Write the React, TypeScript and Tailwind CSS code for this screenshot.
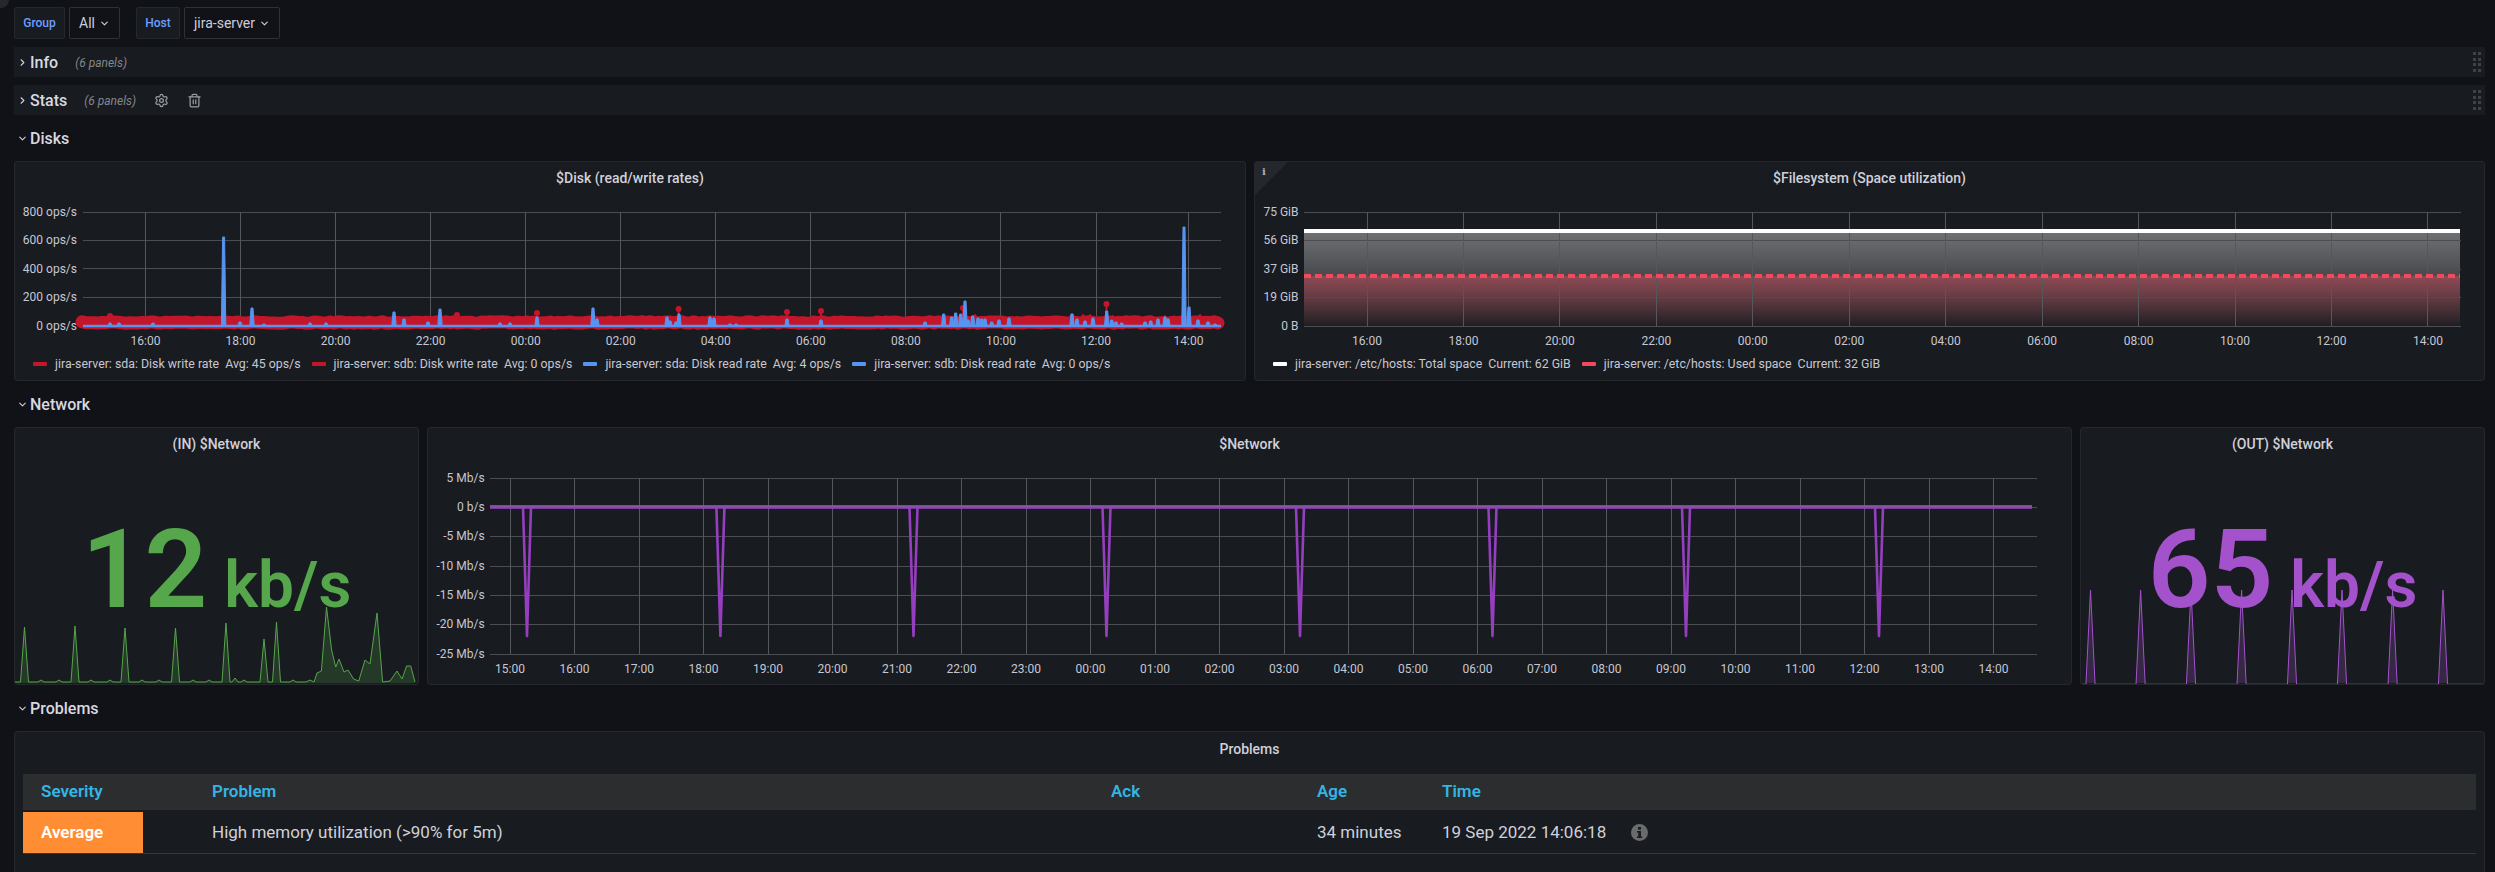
import { ReactNode } from "react";
import { ChevronDown, ChevronRight, Settings, Trash2 } from "lucide-react";

const GRID = "#4b4d52";
const GRID_V = "#55575b";
const AXIS = "#c7c7d4";

function seeded(seed: number) {
  let s = seed;
  return () => {
    s = (s * 16807) % 2147483647;
    return s / 2147483647;
  };
}

function TimeAxis({ ticks, top, bottom, labelY }: { ticks: [number, string][]; top: number; bottom: number; labelY: number }) {
  return (
    <>
      {ticks.map(([x, label]) => (
        <g key={label}>
          <line x1={Math.floor(x) + 0.5} x2={Math.floor(x) + 0.5} y1={top} y2={bottom} stroke={GRID_V} />
          <text x={x} y={labelY} fontSize={12} fill={AXIS} textAnchor="middle" dominantBaseline="central">
            {label}
          </text>
        </g>
      ))}
    </>
  );
}

function ValueAxis({ rows, left, right, labelX }: { rows: [number, string][]; left: number; right: number; labelX: number }) {
  return (
    <>
      {rows.map(([y, label]) => (
        <g key={label}>
          <line x1={left} x2={right} y1={Math.floor(y) + 0.5} y2={Math.floor(y) + 0.5} stroke={GRID} />
          <text x={labelX} y={y} fontSize={12} fill={AXIS} textAnchor="end" dominantBaseline="central">
            {label}
          </text>
        </g>
      ))}
    </>
  );
}

function hourTicks(start: number, step: number, hours: number[]): [number, string][] {
  return hours.map((h, i) => [start + step * i, `${String(h).padStart(2, "0")}:00`]);
}

function RowTitle({ title, open, panels, children }: { title: string; open?: boolean; panels?: boolean; children?: ReactNode }) {
  return (
    <div className={`h-[30px] mb-2 flex items-center ${panels ? "bg-[#181b1f]" : ""}`}>
      <span className="w-4 flex justify-center text-[#ccccdc]">
        {open ? <ChevronDown size={11} strokeWidth={2.5} /> : <ChevronRight size={11} strokeWidth={2.5} />}
      </span>
      <span className="pt-[1px] text-base font-medium text-[#d8d9e0]">{title}</span>
      {panels && <span className="ml-[17px] pt-[1px] text-xs italic text-[#85868c]">(6 panels)</span>}
      {children}
      {panels && (
        <span className="ml-auto mr-[4px] grid grid-cols-2 gap-x-[2px] gap-y-[2.5px]">
          {Array.from({ length: 8 }).map((_, i) => (
            <span key={i} className="w-[3px] h-[3px] bg-[#3f4145]" />
          ))}
        </span>
      )}
    </div>
  );
}

function Legend({ items }: { items: [string, string, string][] }) {
  return (
    <div className="flex items-center gap-[11px] pl-[18px] pb-[2px] h-[24px] text-[12.35px] text-[#c7c7d4] whitespace-nowrap">
      {items.map(([color, name, value]) => (
        <span key={name} className="flex items-center">
          <span className="w-[14px] h-[4px] rounded-[1px] mr-2" style={{ backgroundColor: color }} />
          <span>{name}</span>
          <span className="ml-[6px]">{value}</span>
        </span>
      ))}
    </div>
  );
}

function Panel({ title, className, children }: { title: string; className: string; children: ReactNode }) {
  return (
    <div className={`relative overflow-hidden rounded-[3px] border border-[#24272b] bg-[#181b1f] ${className}`}>
      <div className="h-[35px] pb-[3px] flex items-center justify-center text-sm font-medium text-[#d0d0da]">{title}</div>
      {children}
    </div>
  );
}

function DiskChart() {
  const rand = seeded(4711);
  const band: string[] = [];
  for (let x = 82; x <= 1220; x += 4) {
    band.push(`${x},${(321.5 + (rand() - 0.5) * 1.6).toFixed(1)}`);
  }
  const redBumps: [number, number][] = [
    [110, 315], [457, 314], [537, 312], [678.6, 308], [787, 311], [821, 310], [963, 307], [1106.5, 303],
  ];
  const redHills: [number, number][] = [
    [975, 314], [1072, 313], [1083, 314], [1090, 314], [1113, 315], [1165, 315], [1200, 314],
  ];
  const blue: [number, number][] = [
    [110, 322], [119, 322], [153, 322], [223.6, 236], [240, 321], [252, 307], [264, 323], [310, 322], [326, 322],
    [394, 311], [404, 318], [428, 321], [440, 308], [500, 322], [510, 322], [537, 316], [593, 307], [597, 318],
    [667, 316], [670, 320], [676, 321], [679, 313], [710, 316], [714, 317], [730, 323], [736, 323], [787, 318], [821, 319],
    [925, 321], [943.7, 313], [951.7, 316], [955.7, 312], [960.7, 313], [965, 300], [968, 319], [972.7, 315], [978, 317],
    [981.7, 318], [985, 318], [991.7, 321], [999, 319], [1009, 317], [1072, 313], [1077, 318], [1085, 320], [1093, 317],
    [1106.7, 310], [1111.7, 319], [1116, 321], [1121.7, 322], [1145, 321], [1150.7, 320], [1158, 318], [1165, 316],
    [1168, 318], [1184, 226], [1189, 306], [1198, 319], [1208, 321], [1215, 323],
  ];
  return (
    <svg viewBox="15 196 1230 156" className="block w-[1230px] h-[156px]">
      <ValueAxis
        rows={[[211, "800 ops/s"], [239, "600 ops/s"], [267.5, "400 ops/s"], [296, "200 ops/s"], [325, "0 ops/s"]]}
        left={83}
        right={1221}
        labelX={77}
      />
      <TimeAxis
        ticks={hourTicks(145.5, 95.05, [16, 18, 20, 22, 0, 2, 4, 6, 8, 10, 12]).concat([[1188.5, "14:00"]])}
        top={211}
        bottom={325}
        labelY={340}
      />
      <polyline points={band.join(" ")} fill="none" stroke="#c4162a" strokeWidth={13} strokeLinecap="round" strokeLinejoin="round" />
      {redHills.map(([x, y]) => (
        <path key={x} d={`M${x - 4} 320 L${x} ${y} L${x + 4} 320`} fill="#c4162a" stroke="#c4162a" strokeWidth={2} strokeLinejoin="round" />
      ))}
      {redBumps.map(([x, y]) => (
        <g key={x}>
          <line x1={x} x2={x} y1={y} y2={320} stroke="#c4162a" strokeWidth={2} />
          <circle cx={x} cy={y} r={3} fill="#c4162a" />
        </g>
      ))}
      <line x1={83} x2={1221} y1={325} y2={325} stroke="#5794f2" strokeWidth={2.6} />
      {blue.map(([x, y]) => (
        <path key={x} d={`M${x - 2.2} 325 L${x - 1} ${y} L${x + 1} ${y} L${x + 2.2} 325 Z`} fill="#5794f2" stroke="#5794f2" strokeWidth={1} strokeLinejoin="round" />
      ))}
    </svg>
  );
}

function FilesystemChart() {
  return (
    <svg viewBox="1255 196 1229 156" className="block w-[1229px] h-[156px]">
      <defs>
        <linearGradient id="totalFill" x1="0" x2="0" y1="0" y2="1">
          <stop offset="0" stopColor="#ffffff" stopOpacity={0.38} />
          <stop offset="1" stopColor="#ffffff" stopOpacity={0.01} />
        </linearGradient>
        <linearGradient id="usedFill" x1="0" x2="0" y1="0" y2="1">
          <stop offset="0" stopColor="#f2495c" stopOpacity={0.42} />
          <stop offset="1" stopColor="#f2495c" stopOpacity={0.02} />
        </linearGradient>
      </defs>
      <rect x={1304} y={230} width={1156} height={95} fill="url(#totalFill)" />
      <rect x={1304} y={275} width={1156} height={50} fill="url(#usedFill)" />
      <ValueAxis
        rows={[[211, "75 GiB"], [239, "56 GiB"], [268, "37 GiB"], [296, "19 GiB"], [325, "0 B"]]}
        left={1304}
        right={2461}
        labelX={1298.5}
      />
      <TimeAxis ticks={hourTicks(1367, 96.45, [16, 18, 20, 22, 0, 2, 4, 6, 8, 10, 12, 14])} top={211} bottom={325} labelY={340} />
      <line x1={1304} x2={2460} y1={230} y2={230} stroke="#ffffff" strokeWidth={4} />
      <line x1={1304} x2={2460} y1={275} y2={275} stroke="#f2495c" strokeWidth={4} strokeDasharray="7 4" />
    </svg>
  );
}

function NetworkChart() {
  const dips = [527, 720.4, 913.5, 1106.5, 1300, 1492.5, 1686, 1879];
  let line = "M490 506";
  for (const d of dips) {
    line += ` L${d - 4} 506 L${d} 635 L${d + 4} 506`;
  }
  line += " L2032 506";
  return (
    <svg viewBox="428 462 1643 222" className="block w-[1643px] h-[222px]">
      <ValueAxis
        rows={[[477, "5 Mb/s"], [506, "0 b/s"], [535, "-5 Mb/s"], [565, "-10 Mb/s"], [594, "-15 Mb/s"], [623, "-20 Mb/s"], [653, "-25 Mb/s"]]}
        left={490}
        right={2037}
        labelX={484.7}
      />
      <TimeAxis
        ticks={hourTicks(510, 64.5, [15, 16, 17, 18, 19, 20, 21, 22, 23, 0, 1, 2, 3, 4, 5, 6, 7, 8, 9, 10, 11, 12, 13, 14])}
        top={477}
        bottom={653}
        labelY={668}
      />
      <path d={line} fill="none" stroke="#953fc0" strokeWidth={2.6} strokeLinejoin="round" />
      <line x1={490} x2={2032} y1={506} y2={506} stroke="#953fc0" strokeWidth={3.4} />
      <line x1={490} x2={2032} y1={505} y2={505} stroke="#56a64b" strokeWidth={1} opacity={0.45} />
    </svg>
  );
}

// sparkline drawn behind the stat values, in page coordinates
function Spark({ viewX, width, points, color, fill }: { viewX: number; width: number; points: [number, number][]; color: string; fill: string }) {
  const d = points.map(([x, y]) => `${x},${y}`).join(" ");
  const first = points[0][0];
  const last = points[points.length - 1][0];
  return (
    <svg viewBox={`${viewX} 585 ${width} 100`} className="absolute left-0 bottom-0" width={width} height={100}>
      <polygon points={`${first},684 ${d} ${last},684`} fill={fill} />
      <polyline points={d} fill="none" stroke={color} strokeWidth={1} />
    </svg>
  );
}

const inPoints: [number, number][] = (() => {
  const pts: [number, number][] = [[15, 683], [19, 683]];
  const spikes: [number, number][] = [
    [24.5, 628], [41, 681], [59, 681], [75, 627], [91, 681], [110, 681], [125, 629], [142, 681], [159, 681],
    [175.5, 629], [193, 681], [209, 681], [226, 624], [235, 679], [244, 681], [264, 640], [276.5, 623], [293, 681],
  ];
  for (const [x, y] of spikes) {
    if (y < 670) {
      pts.push([x - 4, 683], [x, y], [x + 4, 683]);
    } else {
      pts.push([x - 3, 683], [x, y], [x + 3, 683]);
    }
  }
  pts.push(
    [306, 683], [310, 681], [314, 683], [317, 674], [321.4, 672], [326.5, 608], [331.6, 651], [335.7, 668], [339, 660],
    [344, 673], [348, 671], [353.6, 680], [358.7, 682], [365, 661], [370, 665], [377, 614], [382.6, 683], [390, 682],
    [397, 672], [402, 680], [406.6, 667], [410.7, 667], [415, 683],
  );
  return pts;
})();

const outPoints: [number, number][] = (() => {
  const pts: [number, number][] = [[2081, 686]];
  for (const x of [2090.5, 2140.6, 2191, 2241.6, 2292, 2342, 2392.6, 2443]) {
    pts.push([x - 4.6, 686], [x, 591], [x + 4.6, 686]);
  }
  pts.push([2484, 686]);
  return pts;
})();

function StatPanel({ title, value, color, sparkX, sparkW, points, fill, className }: {
  title: string;
  value: string;
  color: string;
  sparkX: number;
  sparkW: number;
  points: [number, number][];
  fill: string;
  className: string;
}) {
  return (
    <Panel title={title} className={className}>
      <div className="flex items-baseline justify-center mt-[52px] leading-[110px] font-semibold" style={{ color }}>
        <span className="text-[110px]">{value}</span>
        <span className="text-[64px] ml-[17px]">kb/s</span>
      </div>
      <Spark viewX={sparkX} width={sparkW} points={points} color={color} fill={fill} />
    </Panel>
  );
}

function SelectBox({ label, labelClass, value, valueClass }: { label: string; labelClass: string; value: string; valueClass: string }) {
  return (
    <div className="flex items-center gap-1">
      <span className={`h-8 flex items-center justify-center rounded-[2px] border border-[#24272b] bg-[#181b1f] text-xs font-medium text-[#6e9fff] ${labelClass}`}>
        {label}
      </span>
      <span className={`h-8 flex items-center justify-center gap-[4px] rounded-[2px] border border-[#2e3136] bg-[#111217] text-sm text-[#ccccdc] ${valueClass}`}>
        {value}
        <ChevronDown size={11} strokeWidth={2.5} />
      </span>
    </div>
  );
}

export default function App() {
  return (
    <div className="relative h-[872px] w-full overflow-hidden bg-[#111217] pl-[14px] pr-[10px] pt-[7px] font-[Roboto,sans-serif]">
      <div className="absolute left-0 top-0 w-[9px] h-[8px] rounded-br-full bg-[#24272c]" />

      <div className="flex gap-4 h-8 mb-2">
        <SelectBox label="Group" labelClass="w-[51px]" value="All" valueClass="w-[51px]" />
        <SelectBox label="Host" labelClass="w-[44px]" value="jira-server" valueClass="w-[96px]" />
      </div>

      <RowTitle title="Info" panels />
      <RowTitle title="Stats" panels>
        <Settings size={15} className="ml-[18px] text-[#9a9aa3]" />
        <Trash2 size={15} className="ml-[18px] text-[#9a9aa3]" />
      </RowTitle>
      <RowTitle title="Disks" open />

      <div className="flex gap-2 mb-2">
        <Panel title="$Disk (read/write rates)" className="w-[1232px] h-[220px]">
          <DiskChart />
          <Legend
            items={[
              ["#c4162a", "jira-server: sda: Disk write rate", "Avg: 45 ops/s"],
              ["#c4162a", "jira-server: sdb: Disk write rate", "Avg: 0 ops/s"],
              ["#5794f2", "jira-server: sda: Disk read rate", "Avg: 4 ops/s"],
              ["#5794f2", "jira-server: sdb: Disk read rate", "Avg: 0 ops/s"],
            ]}
          />
        </Panel>
        <Panel title="$Filesystem (Space utilization)" className="w-[1231px] h-[220px]">
          <div className="absolute left-0 top-0 w-[33px] h-[33px] bg-[#24272c] [clip-path:polygon(0_0,100%_0,0_100%)]" />
          <span className="absolute left-[7px] top-[2px] text-[10px] font-bold text-[#b0b0b8] font-['DejaVu_Serif',serif]">i</span>
          <FilesystemChart />
          <Legend
            items={[
              ["#ffffff", "jira-server: /etc/hosts: Total space", "Current: 62 GiB"],
              ["#f2495c", "jira-server: /etc/hosts: Used space", "Current: 32 GiB"],
            ]}
          />
        </Panel>
      </div>

      <RowTitle title="Network" open />

      <div className="flex gap-2 mb-2">
        <StatPanel
          title="(IN) $Network"
          value="12"
          color="#56a64b"
          sparkX={15}
          sparkW={403}
          points={inPoints}
          fill="rgba(86,166,75,0.22)"
          className="w-[405px] h-[258px]"
        />
        <Panel title="$Network" className="w-[1645px] h-[258px]">
          <NetworkChart />
        </Panel>
        <StatPanel
          title="(OUT) $Network"
          value="65"
          color="#a352cc"
          sparkX={2081}
          sparkW={403}
          points={outPoints}
          fill="rgba(163,82,204,0.22)"
          className="w-[405px] h-[258px]"
        />
      </div>

      <RowTitle title="Problems" open />

      <div className="h-[160px] rounded-t-[3px] border border-[#24272b] bg-[#181b1f] px-2">
        <div className="h-[42px] pb-[8px] flex items-center justify-center text-sm font-medium text-[#d0d0da]">Problems</div>
        <div className="grid grid-cols-[189px_899px_206px_125px_1fr] h-9 items-center bg-[#2c2d2f] text-[17px] font-semibold text-[#33b5e5]">
          <span className="pl-[18px]">Severity</span>
          <span>Problem</span>
          <span>Ack</span>
          <span>Age</span>
          <span>Time</span>
        </div>
        <div className="grid grid-cols-[189px_899px_206px_125px_1fr] h-[44px] pt-[2px] items-center border-b border-[#34373b] text-[17px] text-[#d0d0da]">
          <span className="w-[120px] h-full flex items-center pl-[18px] bg-[#ff8d33] font-semibold text-white">Average</span>
          <span>High memory utilization (&gt;90% for 5m)</span>
          <span />
          <span>34 minutes</span>
          <span className="flex items-center">
            19 Sep 2022 14:06:18
            <svg width="17" height="17" viewBox="0 0 17 17" className="ml-[25px]">
              <circle cx="8.5" cy="8.5" r="8.5" fill="#6a6b6d" />
              <rect x="7" y="3" width="3" height="2.6" fill="#1b1d21" />
              <path d="M6 7h4v5.5h1.2V14H6v-1.5h1.2V8.5H6z" fill="#1b1d21" />
            </svg>
          </span>
        </div>
      </div>
    </div>
  );
}
